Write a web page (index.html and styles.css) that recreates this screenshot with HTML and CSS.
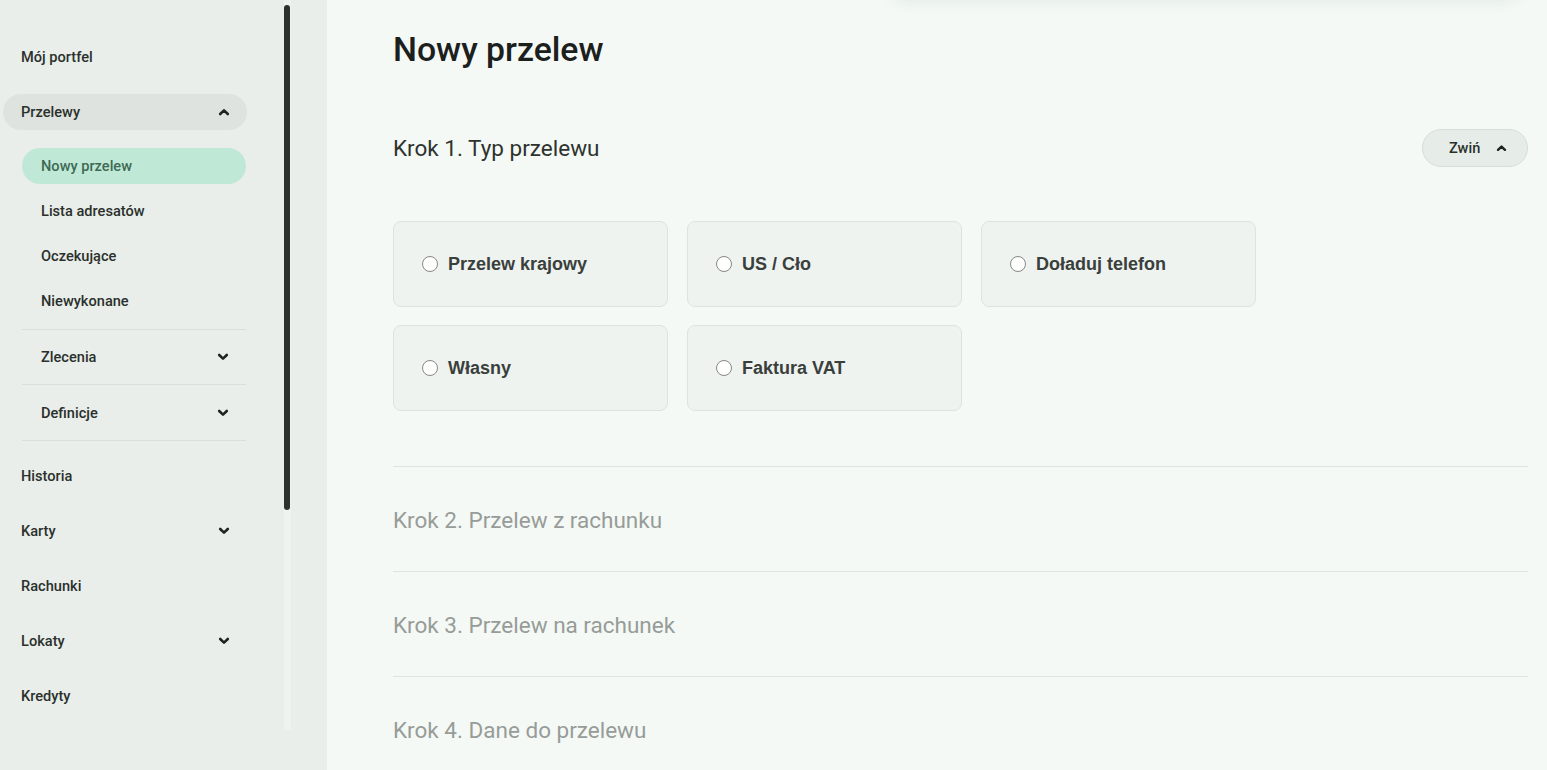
FILE: index.html
```html
<!DOCTYPE html>
<html lang="pl">
<head>
<meta charset="utf-8">
<title>Nowy przelew</title>
<link rel="stylesheet" href="styles.css">
</head>
<body>
<aside class="sidebar">
  <div class="scroll-area">
    <nav class="nav">
      <a class="nav-item">Mój portfel</a>
      <a class="nav-item nav-item--open">Przelewy
        <svg class="chev" viewBox="0 0 12 8"><path d="M2.2 6 6 2.4 9.8 6"/></svg>
      </a>
      <div class="sub">
        <a class="sub-item sub-item--active">Nowy przelew</a>
        <a class="sub-item">Lista adresatów</a>
        <a class="sub-item">Oczekujące</a>
        <a class="sub-item sub-item--last">Niewykonane</a>
        <div class="group">Zlecenia
          <svg class="chev" viewBox="0 0 12 8"><path d="M2.2 2 6 5.6 9.8 2"/></svg>
        </div>
        <div class="group group--last">Definicje
          <svg class="chev" viewBox="0 0 12 8"><path d="M2.2 2 6 5.6 9.8 2"/></svg>
        </div>
      </div>
      <a class="nav-item">Historia</a>
      <a class="nav-item">Karty
        <svg class="chev" viewBox="0 0 12 8"><path d="M2.2 2 6 5.6 9.8 2"/></svg>
      </a>
      <a class="nav-item">Rachunki</a>
      <a class="nav-item">Lokaty
        <svg class="chev" viewBox="0 0 12 8"><path d="M2.2 2 6 5.6 9.8 2"/></svg>
      </a>
      <a class="nav-item">Kredyty</a>
    </nav>
    <div class="scrollbar"><div class="thumb"></div></div>
  </div>
</aside>
<main class="main">
  <div class="top-shadow"></div>
  <h1 class="title">Nowy przelew</h1>
  <section class="step step--active">
    <div class="step-head">
      <h2 class="step-title">Krok 1. Typ przelewu</h2>
      <button class="collapse">Zwiń
        <svg class="chev" viewBox="0 0 12 8"><path d="M2.2 6 6 2.4 9.8 6"/></svg>
      </button>
    </div>
    <div class="options">
      <label class="option"><span class="radio"></span>Przelew krajowy</label>
      <label class="option"><span class="radio"></span>US / Cło</label>
      <label class="option"><span class="radio"></span>Doładuj telefon</label>
      <label class="option"><span class="radio"></span>Własny</label>
      <label class="option"><span class="radio"></span>Faktura VAT</label>
    </div>
  </section>
  <section class="step"><h2 class="step-title step-title--muted">Krok 2. Przelew z rachunku</h2></section>
  <section class="step"><h2 class="step-title step-title--muted">Krok 3. Przelew na rachunek</h2></section>
  <section class="step"><h2 class="step-title step-title--muted">Krok 4. Dane do przelewu</h2></section>
</main>
</body>
</html>
```
FILE: styles.css
```css
* { box-sizing: border-box; }
html, body { margin: 0; height: 770px; overflow: hidden; }
body {
  display: flex;
  font-family: Roboto, "Liberation Sans", sans-serif;
  background: #f4f9f6;
  color: #2b302c;
}

/* Sidebar */
.sidebar {
  width: 327px;
  flex: 0 0 327px;
  background: #e9eeea;
  height: 770px;
}
.scroll-area {
  display: flex;
  width: 291px;
  height: 730px;
  overflow: hidden;
}
.nav {
  flex: 1;
  padding-top: 39px;
  display: flex;
  flex-direction: column;
}
.nav-item {
  display: flex;
  align-items: center;
  justify-content: space-between;
  flex: 0 0 36px;
  height: 36px;
  margin: 0 37px 19px 3px;
  padding: 0 17px 0 18px;
  border-radius: 18px;
  font-size: 14.6px;
  font-weight: 500;
  color: #2b302c;
}
.nav-item--open { background: #dee3df; }
.chev {
  width: 12px;
  height: 8px;
  fill: none;
  stroke: #1f231f;
  stroke-width: 2.6;
  stroke-linecap: round;
  stroke-linejoin: round;
}
.sub {
  margin: -1px 38px 17px 22px;
  display: flex;
  flex-direction: column;
}
.sub-item {
  display: flex;
  align-items: center;
  height: 36px;
  margin-bottom: 9px;
  padding-left: 19px;
  border-radius: 18px;
  font-size: 14.6px;
  font-weight: 500;
  color: #2b302c;
}
.sub-item--last { margin-bottom: 10px; }
.sub-item--active { background: #bfe9d6; color: #3e6955; }
.group {
  display: flex;
  align-items: center;
  justify-content: space-between;
  height: 55px;
  padding: 0 17px 0 19px;
  border-top: 1px solid #d9dfda;
  font-size: 14.6px;
  font-weight: 500;
}
.group--last { height: 57px; border-bottom: 1px solid #d9dfda; }
.scrollbar {
  width: 7px;
  flex: 0 0 7px;
  height: 730px;
  background: #eff3f0;
  padding-top: 5px;
}
.thumb {
  width: 6px;
  height: 505px;
  border-radius: 3px;
  background: #2d312e;
}

/* Main */
.main {
  position: relative;
  flex: 1;
  padding: 30px 19px 0 66px;
}
.top-shadow {
  position: absolute;
  top: -30px;
  left: 560px;
  right: 25px;
  height: 30px;
  border-radius: 0 0 20px 20px;
  box-shadow: 0 3px 14px rgba(40, 70, 50, 0.07);
}
.title {
  margin: 0;
  font-size: 33.75px;
  line-height: 40px;
  font-weight: 500;
  color: #1c201d;
}
.step { border-top: 1px solid #e0e5e2; height: 105px; display: flex; align-items: center; }
.step--active { border-top: none; height: auto; display: block; padding-top: 59px; padding-bottom: 55px; }
.step-head {
  display: flex;
  align-items: center;
  justify-content: space-between;
  height: 38px;
}
.step-title {
  margin: 0;
  font-size: 22.5px;
  font-weight: 400;
  color: #2e332f;
}
.step-title--muted { color: #979c98; position: relative; top: 1px; }
.collapse {
  display: flex;
  align-items: center;
  gap: 16px;
  height: 38px;
  width: 106px;
  padding: 0 0 0 26px;
  border: 1px solid #d6ded9;
  border-radius: 19px;
  background: #e6ede9;
  font-family: Roboto, sans-serif;
  font-size: 14.6px;
  font-weight: 500;
  color: #2b302c;
}
.collapse .chev { width: 11px; }
.options {
  display: grid;
  grid-template-columns: repeat(3, 275px);
  gap: 18px 19px;
  margin-top: 54px;
}
.option {
  display: flex;
  align-items: center;
  height: 86px;
  padding-left: 28px;
  border: 1px solid #dde3df;
  border-radius: 8px;
  background: #eef3f0;
  font-family: "Liberation Sans", Arial, sans-serif;
  font-weight: 700;
  font-size: 18px;
  color: #3a3f3c;
}
.radio {
  width: 16px;
  height: 16px;
  margin-right: 10px;
  border: 1.5px solid #858885;
  border-radius: 50%;
  background: #ffffff;
  flex: 0 0 16px;
}
```
